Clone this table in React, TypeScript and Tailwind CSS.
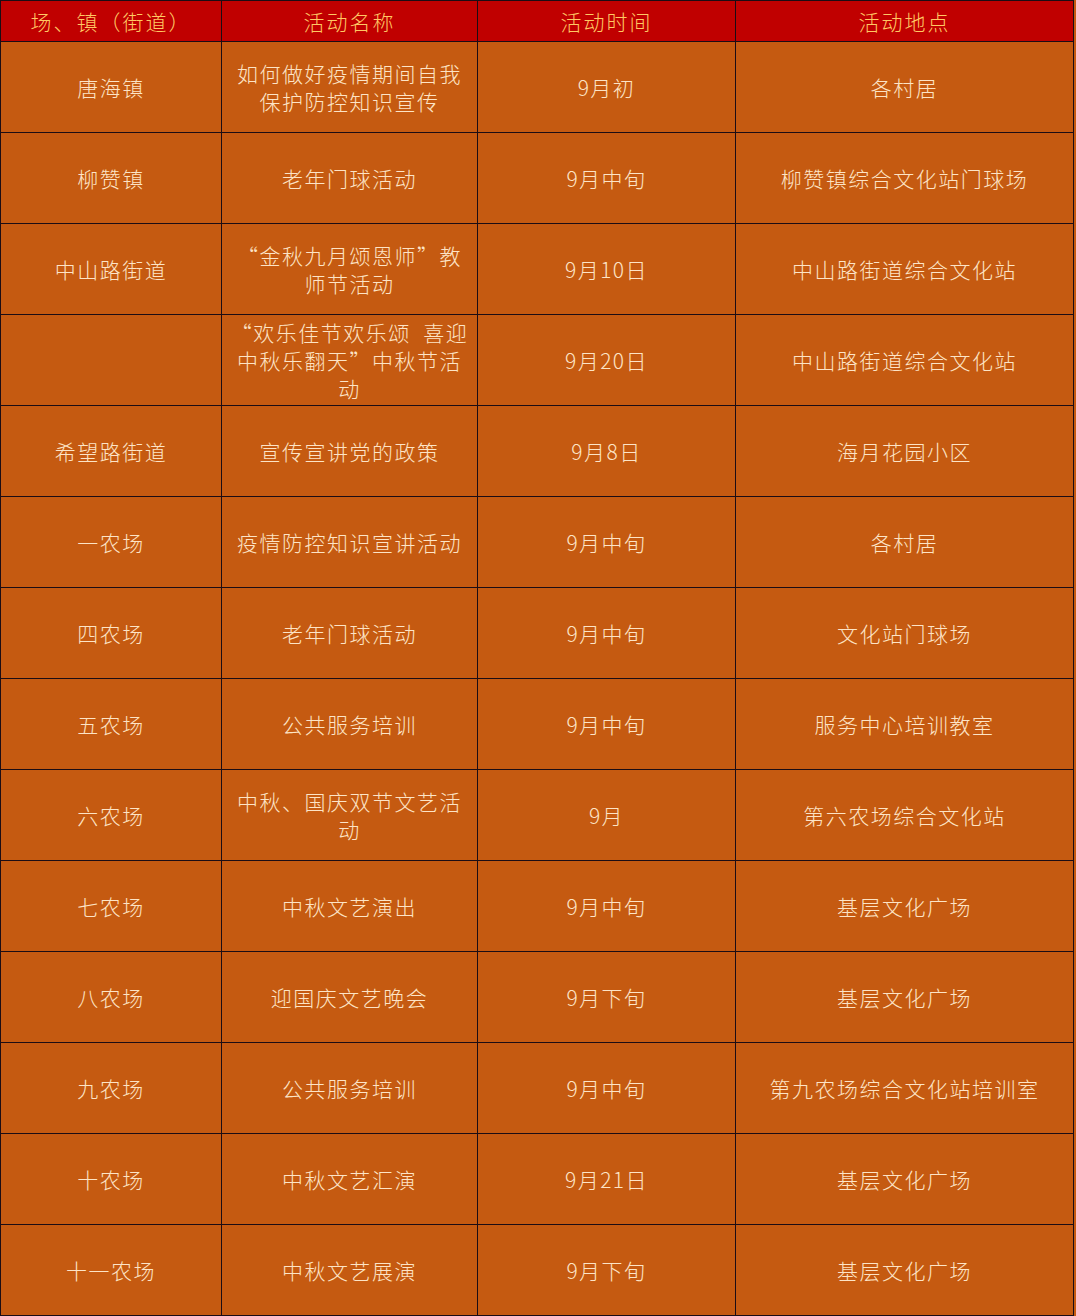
import React from 'react';

type Row = { place: string[]; name: string[]; time: string; site: string };

const headers = ['场、镇（街道）', '活动名称', '活动时间', '活动地点'];

const rows: Row[] = [
  { place: ['唐海镇'], name: ['如何做好疫情期间自我', '保护防控知识宣传'], time: '9月初', site: '各村居' },
  { place: ['柳赞镇'], name: ['老年门球活动'], time: '9月中旬', site: '柳赞镇综合文化站门球场' },
  { place: ['中山路街道'], name: ['“金秋九月颂恩师”教', '师节活动'], time: '9月10日', site: '中山路街道综合文化站' },
  { place: [''], name: ['“欢乐佳节欢乐颂  喜迎', '中秋乐翻天”中秋节活', '动'], time: '9月20日', site: '中山路街道综合文化站' },
  { place: ['希望路街道'], name: ['宣传宣讲党的政策'], time: '9月8日', site: '海月花园小区' },
  { place: ['一农场'], name: ['疫情防控知识宣讲活动'], time: '9月中旬', site: '各村居' },
  { place: ['四农场'], name: ['老年门球活动'], time: '9月中旬', site: '文化站门球场' },
  { place: ['五农场'], name: ['公共服务培训'], time: '9月中旬', site: '服务中心培训教室' },
  { place: ['六农场'], name: ['中秋、国庆双节文艺活', '动'], time: '9月', site: '第六农场综合文化站' },
  { place: ['七农场'], name: ['中秋文艺演出'], time: '9月中旬', site: '基层文化广场' },
  { place: ['八农场'], name: ['迎国庆文艺晚会'], time: '9月下旬', site: '基层文化广场' },
  { place: ['九农场'], name: ['公共服务培训'], time: '9月中旬', site: '第九农场综合文化站培训室' },
  { place: ['十农场'], name: ['中秋文艺汇演'], time: '9月21日', site: '基层文化广场' },
  { place: ['十一农场'], name: ['中秋文艺展演'], time: '9月下旬', site: '基层文化广场' },
];

const colWidths = ['w-[221px]', 'w-[256px]', 'w-[258px]', 'w-[338px]'];

function Lines({ lines }: { lines: string[] }) {
  return (
    <>
      {lines.map((l, i) => (
        <div key={i} className="whitespace-pre">
          {l}
        </div>
      ))}
    </>
  );
}

export default function App() {
  return (
    <div
      className="w-[1076px] h-[1316px] bg-[#c55a11]"
      style={{ fontFamily: '"Noto Sans CJK SC", "Noto Sans", sans-serif' }}
    >
      <table className="border-collapse table-fixed w-[1074px]">
        <colgroup>
          {colWidths.map((w, i) => (
            <col key={i} className={w} />
          ))}
        </colgroup>
        <thead>
          <tr className="h-[41px] bg-[#c00000]">
            {headers.map((h) => (
              <th
                key={h}
                className="border border-[#1c0c14] text-[#ffc864] text-[21px] font-light tracking-[2px] leading-[28px] text-center align-middle p-0"
              >
                {h}
              </th>
            ))}
          </tr>
        </thead>
        <tbody>
          {rows.map((r, i) => (
            <tr key={i} className="h-[91px] bg-[#c55a11]">
              <td className="border border-[#1c0c14] text-[#fde4c6] text-[21px] font-light tracking-[1.5px] leading-[28px] text-center align-middle p-0">
                <Lines lines={r.place} />
              </td>
              <td className="border border-[#1c0c14] text-[#fde4c6] text-[21px] font-light tracking-[1.5px] leading-[28px] text-center align-middle p-0">
                <Lines lines={r.name} />
              </td>
              <td className="border border-[#1c0c14] text-[#fde4c6] text-[21px] font-light tracking-[1.5px] leading-[28px] text-center align-middle p-0">
                {r.time}
              </td>
              <td className="border border-[#1c0c14] text-[#fde4c6] text-[21px] font-light tracking-[1.5px] leading-[28px] text-center align-middle p-0">
                {r.site}
              </td>
            </tr>
          ))}
        </tbody>
      </table>
    </div>
  );
}
